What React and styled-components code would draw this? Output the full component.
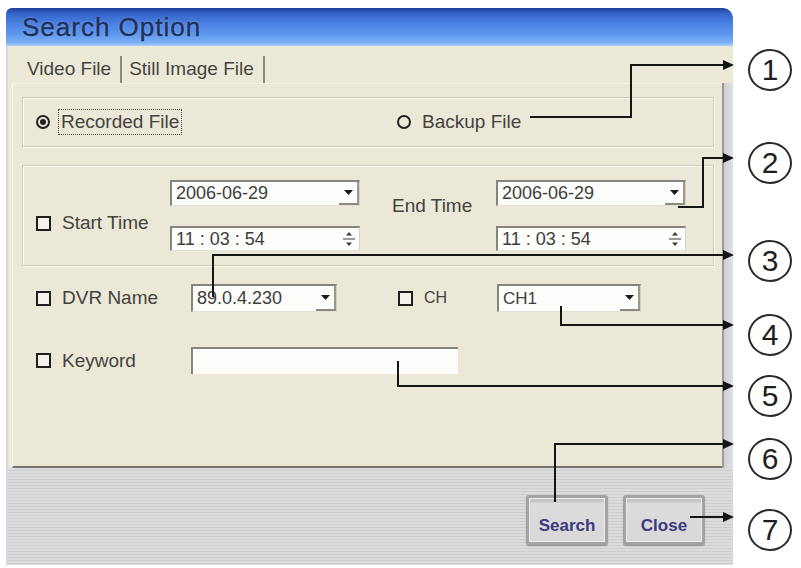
import styled, { createGlobalStyle } from 'styled-components';

const GlobalStyle = createGlobalStyle`
  html, body { margin: 0; padding: 0; background: #ffffff; }
  body { font-family: "Liberation Sans", Arial, sans-serif; }
`

const Stage = styled.div`
  position: relative;
  width: 801px;
  height: 568px;
  display: flex;
  align-items: flex-start;
  overflow: hidden;
`

const Window = styled.div`
  margin: 8px 0 0 6px;
  width: 727px;
  height: 557px;
  display: flex;
  flex-direction: column;
`

const TitleBar = styled.div`
  height: 38px;
  flex: none;
  display: flex;
  align-items: center;
  padding-left: 16px;
  border-radius: 6px 10px 0 0;
  background: linear-gradient(to bottom, #1f3f98 0%, #3463c8 14%, #4a80e2 40%, #5f97ee 70%, #7db2f5 92%, #b4d0f4 100%);
  color: #1b3360;
  font-size: 26px;
  letter-spacing: 1px;
  -webkit-text-stroke: 0.5px #1b3360;
  text-shadow: 0 0 2px rgba(200, 220, 255, 0.7);
`

const Body = styled.div`
  flex: 1;
  display: flex;
  flex-direction: column;
  background: #ece9d9;
  border-left: 2px solid #d7d7e2;
`

const TabRow = styled.div`
  height: 37px;
  flex: none;
  display: flex;
  align-items: flex-end;
  padding-left: 19px;
`

const Tab = styled.div`
  font-size: 19px;
  color: #454540;
  line-height: 26px;
  padding: 0 9px 1px ${p => (p.$first ? 0 : 7)}px;
  border-right: 2px solid #8d8b80;
`

const PanelRow = styled.div`
  height: 385px;
  flex: none;
  display: flex;
`

const Panel = styled.div`
  flex: 1;
  margin-left: 4px;
  padding: 13px 8px 0 9px;
  background: #ebe8d8;
  border-left: 1px solid #f8f7f0;
  border-top: 1px solid #f4f2e8;
  border-bottom: 2px solid #76756b;
  display: flex;
  flex-direction: column;
`

const SideStrip = styled.div`
  width: 9px;
  background: linear-gradient(to right, #cfcfd3, #e2e2e6);
  border-left: 2px solid #9c9b97;
`

const GroupBox = styled.div`
  border: 1px solid #cfccba;
  box-shadow: inset 1px 1px 0 #faf9f2, 1px 1px 0 #faf9f2;
  margin-top: ${p => p.$gap || 0}px;
`

const RadioGroup = styled(GroupBox)`
  height: 48px;
  display: grid;
  grid-template-columns: 361px auto;
  align-items: center;
  padding-left: 13px;
`

const TimeGroup = styled(GroupBox)`
  height: 85px;
  display: grid;
  grid-template-columns: 134px 190px 136px 190px;
  grid-template-rows: 26px 25px;
  row-gap: 20px;
  padding: 14px 0 0 13px;
`

const FieldGrid = styled.div`
  margin-top: 18px;
  padding-left: 14px;
  display: grid;
  grid-template-columns: 155px 146px 61px 99px 144px;
  grid-template-rows: 28px 27px;
  row-gap: 35px;
  align-items: center;
`

const Option = styled.label`
  display: flex;
  align-items: center;
  gap: 11px;
  font-size: ${p => p.$size || 19}px;
  color: #43433e;
  grid-column: ${p => p.$col || 'auto'};
`

const Radio = styled.span`
  flex: none;
  width: 10px;
  height: 10px;
  border-radius: 50%;
  border: 2px solid #222;
  display: flex;
  align-items: center;
  justify-content: center;
  &::after {
    content: '';
    width: 6px;
    height: 6px;
    border-radius: 50%;
    background: ${p => (p.$on ? '#222' : 'transparent')};
  }
`

const Focus = styled.span`
  border: 1px dotted #4a4a44;
  padding: 1px 2px;
  margin-left: -3px;
`

const Check = styled.span`
  width: 11px;
  height: 11px;
  border: 2px solid #1f1f1d;
  background: #f4f2ea;
  flex: none;
`

const SpanLabel = styled(Option)`
  grid-row: 1 / span 2;
  align-self: start;
  margin-top: ${p => p.$top}px;
  padding-left: ${p => p.$indent || 0}px;
`

const Field = styled.div`
  grid-column: ${p => p.$col || 'auto'};
  grid-row: ${p => p.$row || 'auto'};
  height: 100%;
  box-sizing: border-box;
  display: flex;
  align-items: center;
  justify-content: space-between;
  background: #fdfdfb;
  border-style: solid;
  border-width: 2px 1px 1px 2px;
  border-color: #858580 #d4d2c6 #e2e0d4 #858580;
  padding-left: 4px;
  font-size: ${p => p.$size || 18}px;
  color: #3d3d3a;
`

const TextBox = styled(Field)`
  width: 267px;
  border-width: 2px 0 0 2px;
`

const DropBtn = styled.span`
  width: 20px;
  height: 100%;
  display: flex;
  align-items: center;
  justify-content: center;
  box-sizing: border-box;
  border-right: 2px solid #9a988e;
  border-bottom: 2px solid #8a887f;
`

const SpinBtn = styled.span`
  width: 20px;
  height: 100%;
  display: flex;
  align-items: center;
  justify-content: center;
`

const ButtonBar = styled.div`
  flex: 1;
  display: flex;
  justify-content: flex-end;
  align-items: flex-start;
  gap: 15px;
  padding: 27px 28px 0 0;
  background: repeating-linear-gradient(to bottom, #dcdcdc 0, #dcdcdc 2px, #cdcdcd 2px, #cdcdcd 3px);
`

const Button = styled.button`
  width: 82px;
  height: 50px;
  box-sizing: border-box;
  border: 3px solid #a3a3a3;
  border-radius: 3px;
  background: linear-gradient(to bottom, #c6c6c6 0, #c6c6c6 4px, #dcdcdc 5px, #d8d8d8 100%);
  box-shadow: inset 0 0 0 1px #ececec, 0 1px 1px #8e8e8e;
  font-family: "Liberation Sans", Arial, sans-serif;
  font-size: 17px;
  font-weight: bold;
  color: #3a3a80;
  padding: 12px 0 0;
`

const Callouts = styled.div`
  margin-left: 15px;
  padding-top: 49px;
  display: flex;
  flex-direction: column;
`

const Num = styled.div`
  width: 40px;
  height: 38px;
  margin-top: ${p => p.$gap || 0}px;
  border: 2px solid #2a2a2a;
  border-radius: 50%;
  display: flex;
  align-items: center;
  justify-content: center;
  font-size: 30px;
  color: #1e1e1e;
`

const Leaders = styled.svg`
  position: absolute;
  left: 0;
  top: 0;
  pointer-events: none;
`

const Arrow = () => (
  <svg width="11" height="7" viewBox="0 0 11 7">
    <path d="M1 1 H10 L5.5 6 Z" fill="#1a1a1a" />
  </svg>
)

const Spin = () => (
  <svg width="14" height="20" viewBox="0 0 14 20">
    <path d="M7 3 L10 6.5 H4 Z" fill="#3a3a3a" />
    <path d="M1 10 H13" stroke="#7a7a74" strokeWidth="1.5" />
    <path d="M4 13.5 H10 L7 17 Z" fill="#3a3a3a" />
  </svg>
)

const leaders = [
  { d: 'M530 117 H631 V65 H724', y: 65 },
  { d: 'M678 207 H703 V158 H724', y: 158 },
  { d: 'M213 297 V255 H724', y: 255 },
  { d: 'M561 306 V325 H724', y: 325 },
  { d: 'M398 361 V386 H724', y: 386 },
  { d: 'M555 502 V444 H724', y: 444 },
  { d: 'M690 517 H724', y: 517 },
]

const marks = [
  { n: '1', gap: 0 },
  { n: '2', gap: 51 },
  { n: '3', gap: 56 },
  { n: '4', gap: 32 },
  { n: '5', gap: 19 },
  { n: '6', gap: 21 },
  { n: '7', gap: 29 },
]

const App = () => {
  return (
    <Stage>
      <GlobalStyle />
      <Window>
        <TitleBar>Search Option</TitleBar>
        <Body>
          <TabRow>
            <Tab $first>Video File</Tab>
            <Tab>Still Image File</Tab>
          </TabRow>
          <PanelRow>
            <Panel>
              <RadioGroup>
                <Option>
                  <Radio $on />
                  <Focus>Recorded File</Focus>
                </Option>
                <Option>
                  <Radio />
                  Backup File
                </Option>
              </RadioGroup>

              <TimeGroup $gap={18}>
                <SpanLabel $col={1} $top={32}>
                  <Check />
                  Start Time
                </SpanLabel>
                <Field $col={2} $row={1}>
                  2006-06-29
                  <DropBtn><Arrow /></DropBtn>
                </Field>
                <Field $col={2} $row={2}>
                  11 : 03 : 54
                  <SpinBtn><Spin /></SpinBtn>
                </Field>
                <SpanLabel $col={3} $top={15} $indent={32}>End Time</SpanLabel>
                <Field $col={4} $row={1}>
                  2006-06-29
                  <DropBtn><Arrow /></DropBtn>
                </Field>
                <Field $col={4} $row={2}>
                  11 : 03 : 54
                  <SpinBtn><Spin /></SpinBtn>
                </Field>
              </TimeGroup>

              <FieldGrid>
                <Option $col={1}>
                  <Check />
                  DVR Name
                </Option>
                <Field $col={2}>
                  89.0.4.230
                  <DropBtn><Arrow /></DropBtn>
                </Field>
                <Option $col={4} $size={16}>
                  <Check />
                  CH
                </Option>
                <Field $col={5} $size={17}>
                  CH1
                  <DropBtn><Arrow /></DropBtn>
                </Field>
                <Option $col={1}>
                  <Check />
                  Keyword
                </Option>
                <TextBox $col="2 / span 3" />
              </FieldGrid>
            </Panel>
            <SideStrip />
          </PanelRow>
          <ButtonBar>
            <Button>Search</Button>
            <Button>Close</Button>
          </ButtonBar>
        </Body>
      </Window>

      <Callouts>
        {marks.map(m => (
          <Num key={m.n} $gap={m.gap}>{m.n}</Num>
        ))}
      </Callouts>

      <Leaders width="801" height="568" viewBox="0 0 801 568">
        {leaders.map(l => (
          <g key={l.d}>
            <path d={l.d} fill="none" stroke="#151515" strokeWidth="2" />
            <path d={`M723 ${l.y - 5} L734 ${l.y} L723 ${l.y + 5} Z`} fill="#151515" />
          </g>
        ))}
      </Leaders>
    </Stage>
  )
}

export default App;
